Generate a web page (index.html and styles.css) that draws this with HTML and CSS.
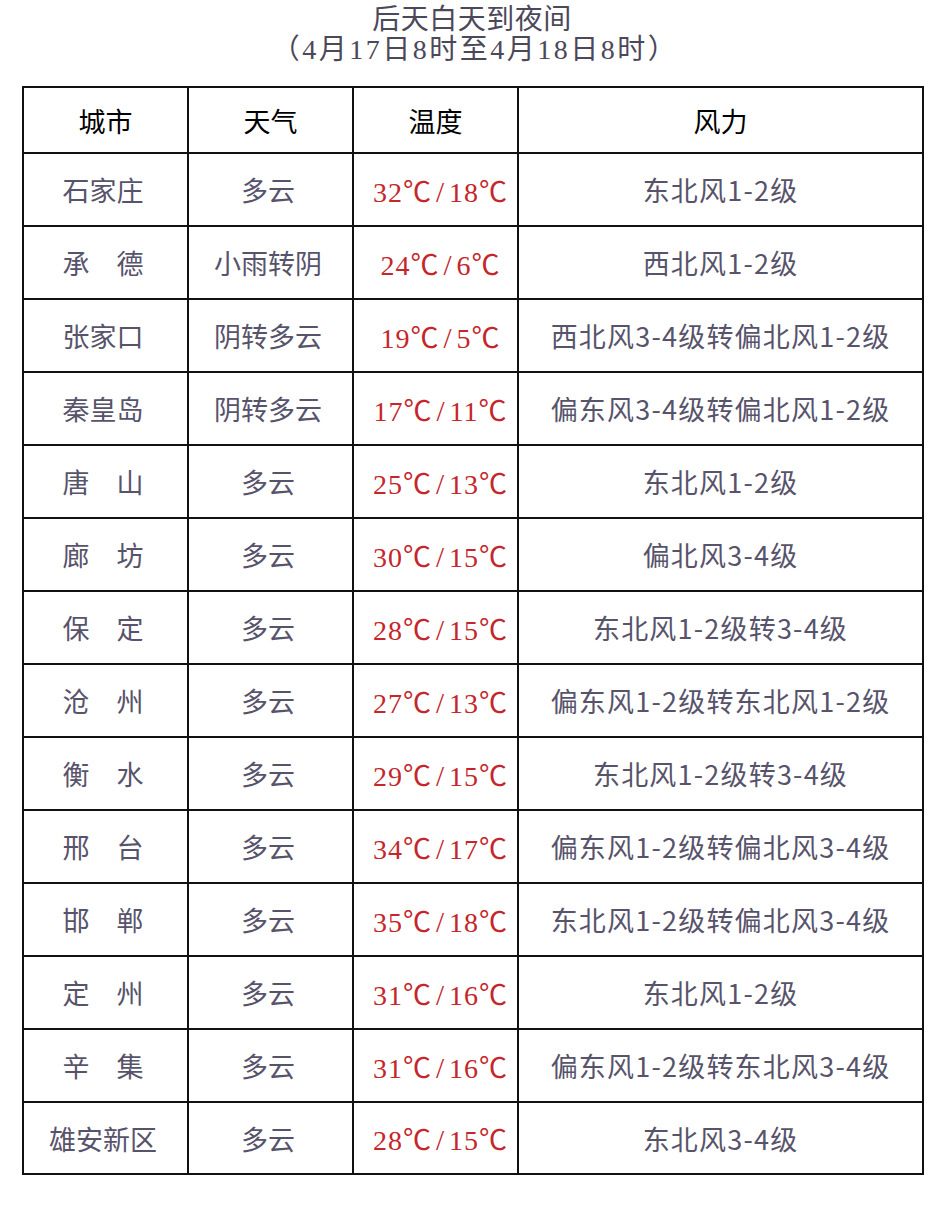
FILE: index.html
```html
<!DOCTYPE html>
<html lang="zh-CN">
<head>
<meta charset="utf-8">
<title>后天白天到夜间</title>
<link rel="stylesheet" href="styles.css">
</head>
<body>
<div class="page">
  <div class="title">
    <div class="title-line main">后天白天到夜间</div>
    <div class="title-line sub">（4月17日8时至4月18日8时）</div>
  </div>
  <table class="forecast">
    <colgroup>
      <col class="c-city"><col class="c-weather"><col class="c-temp"><col class="c-wind">
    </colgroup>
    <thead>
      <tr><th>城市</th><th>天气</th><th>温度</th><th>风力</th></tr>
    </thead>
    <tbody>
      <tr><td class="city">石家庄</td><td class="wx">多云</td><td class="temp">32℃<span class="sl">/</span>18℃</td><td class="wind">东北风1-2级</td></tr>
      <tr><td class="city">承　德</td><td class="wx">小雨转阴</td><td class="temp">24℃<span class="sl">/</span>6℃</td><td class="wind">西北风1-2级</td></tr>
      <tr><td class="city">张家口</td><td class="wx">阴转多云</td><td class="temp">19℃<span class="sl">/</span>5℃</td><td class="wind">西北风3-4级转偏北风1-2级</td></tr>
      <tr><td class="city">秦皇岛</td><td class="wx">阴转多云</td><td class="temp">17℃<span class="sl">/</span>11℃</td><td class="wind">偏东风3-4级转偏北风1-2级</td></tr>
      <tr><td class="city">唐　山</td><td class="wx">多云</td><td class="temp">25℃<span class="sl">/</span>13℃</td><td class="wind">东北风1-2级</td></tr>
      <tr><td class="city">廊　坊</td><td class="wx">多云</td><td class="temp">30℃<span class="sl">/</span>15℃</td><td class="wind">偏北风3-4级</td></tr>
      <tr><td class="city">保　定</td><td class="wx">多云</td><td class="temp">28℃<span class="sl">/</span>15℃</td><td class="wind">东北风1-2级转3-4级</td></tr>
      <tr><td class="city">沧　州</td><td class="wx">多云</td><td class="temp">27℃<span class="sl">/</span>13℃</td><td class="wind">偏东风1-2级转东北风1-2级</td></tr>
      <tr><td class="city">衡　水</td><td class="wx">多云</td><td class="temp">29℃<span class="sl">/</span>15℃</td><td class="wind">东北风1-2级转3-4级</td></tr>
      <tr><td class="city">邢　台</td><td class="wx">多云</td><td class="temp">34℃<span class="sl">/</span>17℃</td><td class="wind">偏东风1-2级转偏北风3-4级</td></tr>
      <tr><td class="city">邯　郸</td><td class="wx">多云</td><td class="temp">35℃<span class="sl">/</span>18℃</td><td class="wind">东北风1-2级转偏北风3-4级</td></tr>
      <tr><td class="city">定　州</td><td class="wx">多云</td><td class="temp">31℃<span class="sl">/</span>16℃</td><td class="wind">东北风1-2级</td></tr>
      <tr><td class="city">辛　集</td><td class="wx">多云</td><td class="temp">31℃<span class="sl">/</span>16℃</td><td class="wind">偏东风1-2级转东北风3-4级</td></tr>
      <tr class="last"><td class="city">雄安新区</td><td class="wx">多云</td><td class="temp">28℃<span class="sl">/</span>15℃</td><td class="wind">东北风3-4级</td></tr>
    </tbody>
  </table>
</div>
</body>
</html>
```

FILE: styles.css
```css
html, body {
  margin: 0;
  padding: 0;
  background: #ffffff;
}

.page {
  padding: 5px 0 0 22px;
  font-family: "Liberation Serif", "Noto Sans CJK SC", serif;
}

.title {
  width: 900px;
  text-align: center;
  color: #4b485a;
  font-size: 28px;
  line-height: 30px;
}

.title .main {
  letter-spacing: 0.5px;
}

.title .sub {
  letter-spacing: 2.5px;
  padding-left: 6px;
}

.forecast {
  margin-top: 21px;
  width: 900px;
  border-collapse: collapse;
  table-layout: fixed;
}

.c-city, .c-weather, .c-temp { width: 165px; }
.c-wind { width: 405px; }

.forecast th,
.forecast td {
  border: 2px solid #111111;
  text-align: center;
  vertical-align: middle;
  padding: 0;
  white-space: nowrap;
}

.forecast th {
  height: 64px;
  font-size: 27px;
  font-weight: normal;
  color: #000000;
}

.forecast td {
  height: 71px;
  font-size: 27px;
  color: #57536b;
}

.forecast td.city,
.forecast td.wx {
  padding-right: 5px;
}

.forecast td.temp {
  color: #c4262b;
  font-size: 28px;
  letter-spacing: 1px;
  padding-left: 10px;
}

.temp .sl {
  display: inline-block;
  margin: 0 4px;
  font-size: 29px;
}

.forecast td.wind {
  font-family: "Noto Sans CJK SC", sans-serif;
  letter-spacing: 1.2px;
}

.forecast tr.last td {
  height: 70px;
}
```
